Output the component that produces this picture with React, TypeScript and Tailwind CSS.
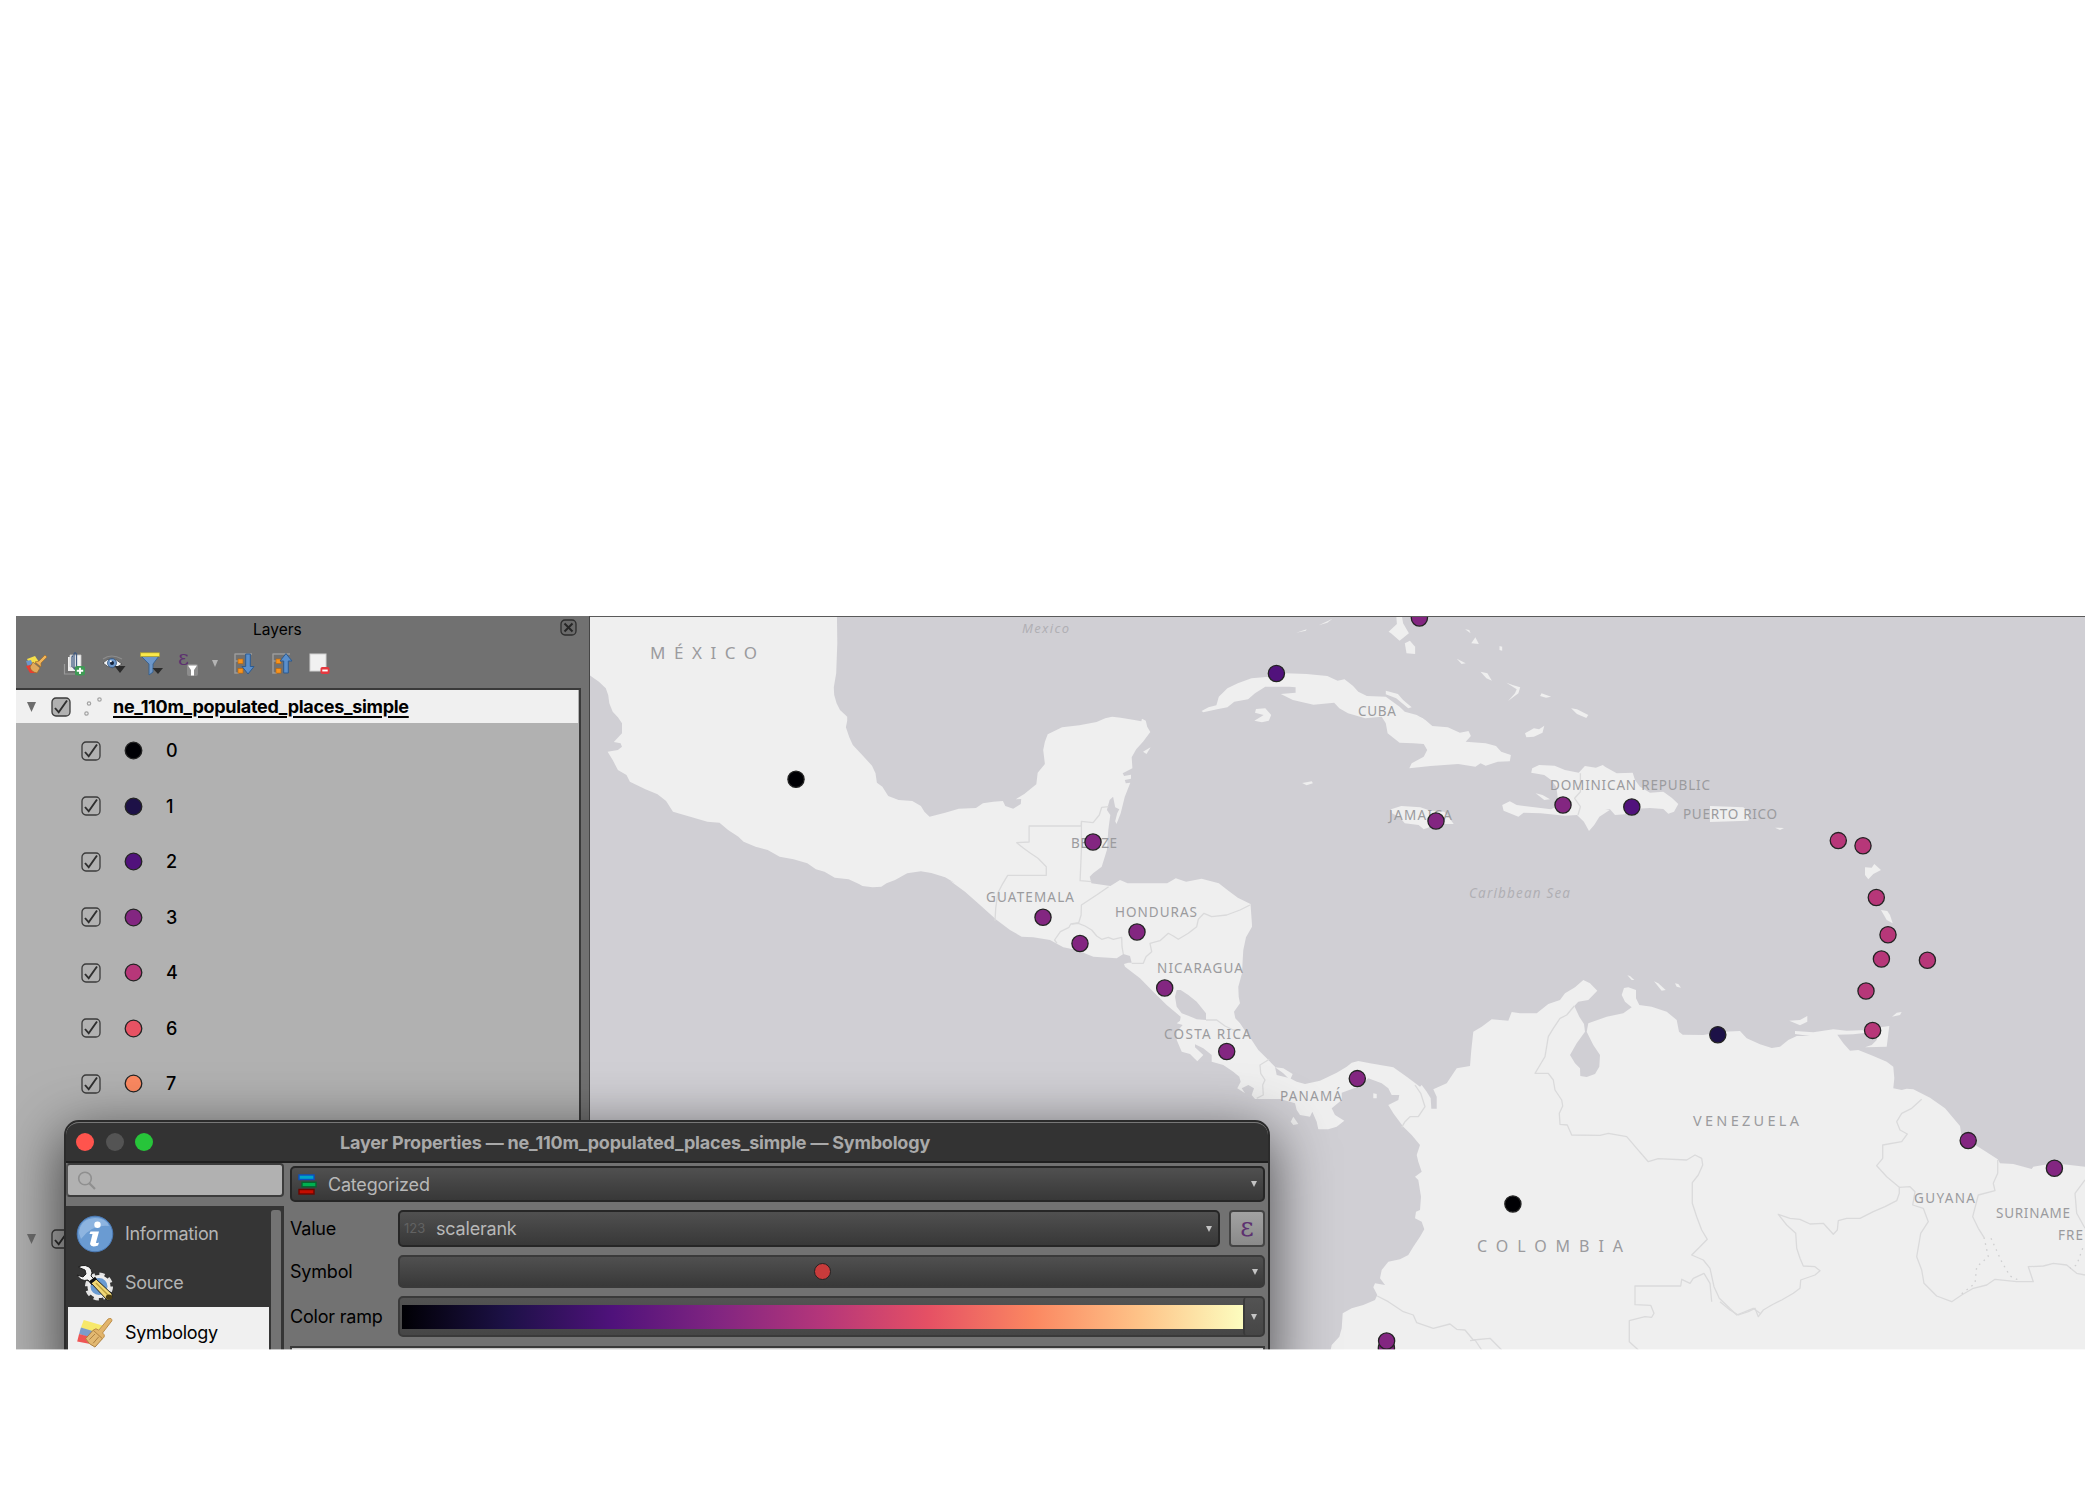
import React from 'react';

/* ---------- map geometry ---------- */

type Frame = [ox: number, oy: number, sx: number, sy: number];
type Part = [Frame, string];

// Survey frames: each coastline part is digitised in its own local grid.
const A: Frame = [580, 600, 2.9037, 3];
const B: Frame = [1100, 600, 2.9037, 3];
const C: Frame = [950, 850, 3, 3];
const D: Frame = [1260, 1000, 3, 3];
const F: Frame = [1700, 1000, 3, 3];
const G: Frame = [1600, 600, 3, 3];

const line = (...parts: Part[]) =>
  'M' +
  parts
    .flatMap(([[ox, oy, sx, sy], pts]) =>
      pts
        .trim()
        .split(/\s+/)
        .map((p) => {
          const [x, y] = p.split(',').map(Number);
          return `${(ox + x / sx).toFixed(1)} ${(oy + y / sy).toFixed(1)}`;
        }),
    )
    .join('L');
const area = (...parts: Part[]) => line(...parts) + 'Z';

const MAINLAND = area(
  [A, '20,40 746,40 747,130 744,220 737,262 738,285 745,310 755,330 776,350 776,362 772,382 782,412 792,435 822,468 848,497 858,520 862,548 878,560 895,588 925,600 965,603 990,618 1000,635 1015,650 1060,638 1100,626 1150,624 1170,610 1200,605 1228,603 1235,618 1258,626 1280,612 1281,597 1265,598 1290,582 1325,553 1329,518 1350,492 1345,450 1350,425 1358,403 1400,382 1450,376 1500,366 1525,355'],
  [B, '35,350 60,353 100,360 120,364 122,356 133,362 137,380 146,396 125,425 105,448 92,472 94,505 66,520 70,528 90,524 90,536 72,540 75,550 88,548 72,590 60,640 48,672 44,664 50,640 56,628 44,622 38,590 28,600 20,630 30,645 24,690 20,750 5,800 -20,820'],
  [A, '1480,830 1485,850 1520,855 1540,858 1560,845 1568,840'],
  [B, '65,843 80,850 195,850 220,835 250,845 295,836 345,850 370,870 400,893 437,912 441,970'],
  [C, '906,230 888,262 880,300 878,330 876,370 865,410 866,440 870,460 852,485 856,505 870,520 890,550 905,570 925,600 950,625 975,650 980,675 1020,685 1040,695 1065,702 1110,692 1160,668 1190,650 1205,638 1225,633 1260,640 1330,652 1370,680 1410,710'],
  [D, '485,255 500,275 512,295 514,326 530,326 530,290 520,268 560,250 590,205 630,198 634,150 640,95 665,80 695,58 745,62 755,36 780,40 830,40 865,12 900,0 915,-20 945,-38 970,-60 990,-50 1012,-28 985,0 955,5 943,18 958,50 972,72 975,95 950,130 930,165 945,190 960,205 961,228 980,231 1005,222 1018,200 1020,165 1000,135 985,105 980,95 985,70 1040,50 1090,40 1115,22 1095,5 1085,-15 1092,-36 1105,-38 1128,-30 1128,-5 1138,15 1175,20 1220,35 1250,60 1257,95 1268,104 1330,105 1390,95 1440,93 1460,115 1500,133'],
  [F, '180,133 215,144 240,140 265,120 290,108 330,108 285,102 285,93 340,97 400,88 440,92 500,90 500,98 460,103 412,104 430,130 450,152 475,150 520,168 560,185 580,200 583,235 580,265 605,270 620,266 640,268 690,293 735,325 780,378 785,410 850,450 893,478 900,490 940,492 995,507 1000,500 1060,490 1110,495 1170,502 1170,1060'],
  [D, '210,1060 215,1035 238,1010 245,985 248,940 275,925 310,915 345,900 352,885 340,862 345,850 375,855 360,835 365,810 385,785 420,778 445,765 460,740 480,710 493,688 485,665 465,655 468,635 480,630 483,590 475,540 465,530 485,515 475,485 470,465 480,435 455,405 430,380 400,340 385,315 415,300 418,285 395,285 385,265 365,250 345,242 325,235 290,262 245,278 245,300 215,325 225,345 253,362 230,380 205,388 175,388 170,365 157,335 150,350 120,345 110,330 105,310 60,297 0,297'],
  [C, '915,747 905,735 912,715 895,705 875,715 885,730 862,715 872,695 868,680 850,665 820,645 785,635 785,615 760,595 735,583 735,592 760,615 742,634 720,612 695,605 680,570 680,545 698,525 680,520 690,512 692,500 650,465 610,425 570,385 525,350 522,342 535,338 545,338 540,318 520,312 500,325 430,320 380,300 340,292 300,270 250,262 215,260 180,240 140,210 90,165 45,125 0,92'],
  [A, '1090,850 1060,832 1020,819 990,814 950,820 915,840 890,850 875,860 850,862 820,858 810,852 780,838 740,833 710,815 685,808 660,790 620,778 580,770 545,750 510,740 475,725 460,710 430,690 405,668 370,665 320,650 270,635 250,603 225,583 190,568 145,545 135,525 110,510 95,480 80,455 110,450 122,440 118,430 98,426 122,400 122,370 110,352 95,335 85,310 82,285 75,265 55,245 20,220'],
);

const ISLANDS = [
  // Cuba and its keys
  area([B, '295,333 315,322 338,316 345,290 370,265 400,250 440,235 490,230 540,220 600,222 660,228 690,242 710,238 735,258 750,275 775,288 830,290 870,320 885,335 920,345 945,360 965,378 1010,382 1045,398 1070,393 1077,408 1062,425 1120,430 1150,438 1165,455 1193,465 1190,484 1155,485 1120,497 1105,490 1090,500 1040,492 960,498 898,505 905,490 940,470 950,450 940,432 910,430 870,428 835,400 830,370 818,350 770,355 720,340 695,325 680,308 620,314 560,300 525,282 568,278 568,262 550,260 480,260 450,280 430,298 390,305 370,322 340,328 300,337']),
  area([B, '453,327 480,325 497,345 490,362 470,367 448,362 465,352 475,345 450,338']),
  area([B, '830,272 865,282 880,300 905,322 895,325 860,295 830,283']),
  area([B, '925,350 938,355 945,365 930,360']),
  // Jamaica, Cayman
  area([B, '845,628 875,618 930,622 960,632 1000,635 1015,655 1027,672 1000,672 960,680 940,688 925,675 885,670 870,652 848,640']),
  area([B, '587,549 615,544 618,550 600,556']),
  // Hispaniola
  area(
    [B, '1255,505 1275,495 1320,497 1350,510 1390,518 1408,498 1440,503 1460,495'],
    [G, '15,500 50,520 98,518 105,540 120,560 150,578 190,575 215,593 235,612 222,635 205,641 190,627 150,624 100,627 75,643 45,645 30,628 15,628'],
    [B, '1480,630 1450,650 1435,675 1420,693 1405,665 1385,645 1350,647 1280,640 1230,638 1215,650 1172,632 1168,615 1190,604 1210,615 1310,628 1340,612 1330,600 1325,560 1310,540 1290,525 1252,518'],
  ),
  area([B, '1265,580 1285,585 1307,598 1290,600']),
  // Lesser islands
  area([G, '330,618 430,622 450,640 445,662 330,666']),
  area([G, '525,683 552,684 540,690']),
  area([G, '795,802 815,803 823,792 843,810 820,822 805,838 795,825']),
  area([G, '843,930 862,933 870,945 878,970 860,960']),
  area([F, '540,82 568,78 560,140 495,142 515,135 530,120']),
  area([F, '268,62 300,60 322,48 322,65 300,76']),
  area([F, '576,50 590,38 605,36 600,45']),
  area([G, '82,1126 90,1128 103,1140 95,1140']),
  area([G, '162,1144 175,1150 197,1170 185,1172']),
  area([G, '225,1150 235,1152 243,1163 230,1160']),
  area([B, '125,455 147,442 135,462']),
  area([C, '1030,800 1045,822 1030,825 1022,815']),
  area([C, '1270,730 1280,732 1280,745 1270,745']),
  area([C, '975,652 1000,655 1028,672 1020,690 1000,670']),
  // Bahamas
  area([B, '860,45 876,45 880,70 897,100 870,122 845,100 838,95 862,72']),
  area([B, '885,130 900,122 915,140 915,162 890,160']),
  area([B, '1060,88 1072,90 1076,100']),
  area([B, '1090,112 1100,132 1078,130']),
  area([B, '1036,176 1062,190 1050,192']),
  area([B, '1160,138 1168,140 1168,152 1160,150']),
  area([B, '1105,215 1125,220 1138,242 1122,235']),
  area([B, '1180,248 1200,256 1220,262 1215,280 1185,303 1205,280 1210,268']),
  area([B, '1278,288 1282,280 1310,290 1295,293']),
  area([B, '1368,325 1385,328 1418,345 1412,354 1385,342']),
  area([B, '1234,400 1260,385 1275,388 1290,377 1285,398 1260,410 1238,412']),
  area([B, '570,98 600,88 598,92']),
  area([B, '635,76 675,56 660,68']),
];

const LAKES = [area([C, '680,420 692,420 715,435 740,455 768,490 768,510 740,508 715,497 695,490 680,470 675,440'])];

const BORDERS = [
  line([A, '1456,668 1456,678 1304,678 1304,726 1268,728 1288,745 1308,760 1330,775 1354,800 1354,826 1242,826 1228,850 1213,880 1207,925 1205,962']),
  line([A, '1535,620 1515,622 1508,645 1490,668 1456,664 1456,750 1452,842 1485,845']),
  line([A, '1535,860 1500,885 1456,915 1455,945 1448,968 1425,972 1420,982 1395,995 1378,1020 1385,1030']),
  line([C, '365,222 385,220 405,228 425,240 440,258 455,268 475,262 490,268 515,262 516,290 520,312']),
  line([C, '545,340 580,340 588,320 605,305 600,280 630,272 655,250 670,258 685,268 715,250 740,230 745,208 762,190 785,200 830,195 870,180 900,165']),
  line([C, '768,510 800,510 825,528 850,540 870,540']),
  line([C, '958,628 930,645 932,670 945,690 938,705 940,735 920,745']),
  line([C, '1395,705 1412,730 1425,770 1405,800 1380,800 1365,815 1355,832']),
  line([D, '943,18 920,45 900,55 880,85 865,110 855,170 840,195 825,220 865,220 880,240 885,270 905,300 908,318 898,340 900,373 922,375 935,405 1020,406 1045,400 1100,410 1130,445 1165,485 1195,476 1280,480 1305,465 1325,475 1328,495 1315,525 1297,548 1297,610 1310,650 1325,690 1342,718 1320,740 1295,765 1330,780 1350,805 1362,860 1378,895 1430,945 1480,925 1500,940']),
  line([D, '1355,905 1350,850 1332,820 1300,835 1290,850 1265,838 1262,858 1125,858 1125,914 1172,916 1182,940 1175,952 1155,950 1108,962 1108,1025 1135,1050']),
  line([D, '352,888 385,905 430,935 460,945 470,968 520,985 570,972 590,988 615,990 640,1020 690,1015 725,1050']),
  line([D, '630,1022 645,1020 665,1050']),
  line([F, '60,905 90,930 115,945 145,935 165,925 175,950 190,930 215,915 245,900 280,880 300,865 302,840 345,825 360,812 345,800 310,798 300,775 290,745 287,700 260,675 235,643 270,655 300,658 330,672 370,670 400,703 412,690 415,662 440,655 480,655 520,635 555,620 590,602 598,580 598,562 560,530 530,497 548,475 548,435 605,425 622,402 600,390 590,365 605,340 635,325 665,298']),
  line([F, '598,562 630,560 645,575 638,615 670,625 685,665 662,700 650,770 665,810 672,850 710,888 755,905 785,885 820,865 860,855 885,838 950,845 1000,845 985,800 1030,798 1060,790 1100,795 1130,820 1155,825']),
  line([F, '893,480 893,520 880,550 885,572 835,585 818,650 835,685 852,712']),
  line([F, '1155,540 1125,580 1130,640 1155,685']),
  line([B, '1395,520 1395,575 1378,595 1395,620 1388,645']),
];

const DOTTED = [
  line([F, '852,712 865,770 830,800 825,850 780,885']),
  line([F, '873,715 905,785 930,828 955,840']),
  line([F, '1148,745 1130,795 1110,805']),
];

/* [text, x, baseline, width, font size, italic] */
const MAP_LABELS: [string, number, number, number, number, boolean?][] = [
  ['MÉXICO', 650, 659, 107, 17],
  ['Mexico', 1022, 633, 47, 13, true],
  ['CUBA', 1358, 716, 38, 13.5],
  ['JAMAICA', 1389, 820, 63, 13.5],
  ['DOMINICAN REPUBLIC', 1550, 789.5, 160, 13.5],
  ['PUERTO RICO', 1683, 819, 94, 13.5],
  ['Caribbean Sea', 1469, 898, 101, 13.5, true],
  ['BELIZE', 1071, 848, 46, 13.5],
  ['GUATEMALA', 986, 902, 88, 13.5],
  ['HONDURAS', 1115, 917, 82, 13.5],
  ['NICARAGUA', 1157, 973, 86, 13.5],
  ['COSTA RICA', 1164, 1039, 87, 13.5],
  ['PANAMÁ', 1280, 1100.5, 62, 13.5],
  ['VENEZUELA', 1693, 1126, 106, 14.5],
  ['COLOMBIA', 1477, 1252, 146, 16],
  ['GUYANA', 1914, 1202.5, 61, 13.5],
  ['SURINAME', 1996, 1217.5, 74, 13.5],
  ['FRE', 2058, 1240, 25, 13.5],
];

const CLASSES = [
  { rank: '0', color: '#000004' },
  { rank: '1', color: '#1d1147' },
  { rank: '2', color: '#51127c' },
  { rank: '3', color: '#832681' },
  { rank: '4', color: '#b73779' },
  { rank: '6', color: '#e75263' },
  { rank: '7', color: '#fc8961' },
];

/* [x, y, class colour] */
const PLACES: [number, number, string][] = [
  [796, 779.3, '#000004'],
  [1093, 842, '#832681'],
  [1043, 917.3, '#832681'],
  [1080, 943.5, '#832681'],
  [1137, 932, '#832681'],
  [1164.7, 988, '#832681'],
  [1226.7, 1051.5, '#832681'],
  [1357.3, 1078.6, '#832681'],
  [1419.4, 618, '#832681'],
  [1276.4, 673.5, '#51127c'],
  [1436, 821, '#832681'],
  [1563, 805, '#832681'],
  [1631.8, 807, '#51127c'],
  [1838.3, 840.6, '#b73779'],
  [1863, 845.7, '#b73779'],
  [1876.3, 897.5, '#b73779'],
  [1888, 934.7, '#b73779'],
  [1881.4, 959, '#b73779'],
  [1927.4, 960.3, '#b73779'],
  [1866, 991, '#b73779'],
  [1872.6, 1030.4, '#b73779'],
  [1717.8, 1034.7, '#1d1147'],
  [1968.2, 1140.6, '#832681'],
  [2054.4, 1168.2, '#832681'],
  [1512.9, 1204, '#000004'],
  [1386.4, 1348, '#832681'],
  [1386.6, 1341, '#832681'],
];

function MapCanvas() {
  return (
    <svg className="block h-[733px] w-[1495px]" viewBox="590 617 1495 733">
      <rect x="590" y="617" width="1495" height="733" fill="#d0cfd4" />
      <g fill="#efefef">
        <path d={MAINLAND} />
        {ISLANDS.map((d, i) => (
          <path key={i} d={d} />
        ))}
      </g>
      {LAKES.map((d, i) => (
        <path key={i} d={d} fill="#d0cfd4" />
      ))}
      <g fill="none" stroke="#dadadb" strokeWidth="1.3" strokeLinejoin="round">
        {BORDERS.map((d, i) => (
          <path key={i} d={d} />
        ))}
        {DOTTED.map((d, i) => (
          <path key={i} d={d} stroke="#cfcfd0" strokeDasharray="1.6 4.5" />
        ))}
      </g>
      <g fill="#9b9b9e" fontFamily='"Noto Sans", "Open Sans", sans-serif'>
        {MAP_LABELS.map(([t, x, y, w, size, italic]) => (
          <text
            key={t}
            x={x}
            y={y}
            fontSize={size}
            textLength={w}
            fontStyle={italic ? 'italic' : 'normal'}
            fill={italic ? '#b0b0b4' : undefined}
          >
            {t}
          </text>
        ))}
      </g>
      <g stroke="#232323" strokeWidth="1.3">
        {PLACES.map(([x, y, c], i) => (
          <circle key={i} cx={x} cy={y} r="8.1" fill={c} />
        ))}
      </g>
    </svg>
  );
}

/* ---------- icons ---------- */

function Brush({ className }: { className: string }) {
  return (
    <svg className={className} viewBox="0 0 38 32">
      <path d="M7 2 27 8 20 16 4 10Z" fill="#f7e86b" />
      <path d="M4 10 20 15 17 22 2 17Z" fill="#7a9ccb" />
      <path d="M2 17 17 21 21 29 0 25Z" fill="#ee5555" />
      <path d="M17 13 27 22 19 31 Q12 28 9 22Z" fill="#e2b871" stroke="#a97c3c" strokeWidth="1" />
      <path d="M13 23 19 17M17 27 23 20" stroke="#a97c3c" strokeWidth="1" />
      <path d="M17 13Q20 10 23 13L33 1Q37-1 37 3L27 16Q31 19 27 22Z" fill="#e2b46a" stroke="#b98942" strokeWidth="1" />
    </svg>
  );
}

function ToolBrush() {
  return (
    <svg className="h-[22px] w-[22px]" viewBox="0 0 22 22">
      <path d="M2 6 10 3 14 9 5 12Z" fill="#f5df4a" />
      <path d="M1 8 6 7 8 12 3 14Z" fill="#6d97c9" />
      <path d="M1 13 9 11 12 20 5 20Z" fill="#ea3c31" />
      <path d="M8 9 15 15 12 20Q6 19 5 14Z" fill="#e0a95c" stroke="#9a6b2c" strokeWidth=".7" />
      <path d="M10 9 14 8 20 2 22 4 16 10 16 14Z" fill="#f0b45a" stroke="#a46f27" strokeWidth=".7" />
    </svg>
  );
}

function AddGroup() {
  return (
    <svg className="h-[24px] w-[22px]" viewBox="0 0 22 24">
      <path d="M1.500 12V22H12" fill="none" stroke="#9a9a9a" strokeWidth="1.200" />
      <path d="M5 5H9V16H15V19H5Z" fill="#efefef" />
      <path d="M7 3H18V15H7Z" fill="#f2f2f2" stroke="#c9c9c9" strokeWidth=".8" />
      <path d="M9 15V5Q9 4 10 4M11 17V2Q12-.5 13.500 2V15Q12 17.500 11 17" fill="none" stroke="#415a80" strokeWidth="1.300" />
      <rect x="12" y="14" width="10" height="9.500" rx="2" fill="#3f9a55" />
      <path d="M17 15.700V22M13.800 18.800H20.200" stroke="#fff" strokeWidth="1.900" />
    </svg>
  );
}

function Eye() {
  return (
    <svg className="h-[20px] w-[24px]" viewBox="0 0 24 20">
      <path d="M1 5Q9-1 20 5" fill="none" stroke="#8d8d8d" strokeWidth="1.200" />
      <path d="M1 9Q9 0 20 10Q10 18 1 9Z" fill="#f2f2f2" stroke="#4a4a4a" strokeWidth=".9" />
      <circle cx="10" cy="9" r="4.500" fill="#6d97c9" stroke="#35567f" strokeWidth=".8" />
      <circle cx="10" cy="9" r="2" fill="#15233a" />
      <circle cx="8.800" cy="7.300" r="1" fill="#fff" />
      <path d="M12.500 12H23.500L18 19Z" fill="#2b2b2b" />
    </svg>
  );
}

function Filter() {
  return (
    <svg className="h-[24px] w-[24px]" viewBox="0 0 24 24">
      <path d="M1 4H19L13 12V20L9 23V12Z" fill="#6d97c9" stroke="#35608f" strokeWidth=".9" />
      <rect x=".5" y=".8" width="19" height="3.600" fill="#fbe94a" stroke="#b5a424" strokeWidth=".7" />
      <path d="M12.500 16H23L18 22Z" fill="#2b2b2b" />
    </svg>
  );
}

function FilterExpression() {
  return (
    <div className="flex h-[24px] w-[22px] items-start">
      <span className="-mt-[7px] font-['DejaVu_Serif',serif] text-[21px] leading-[26px] text-[#5d3170]">ε</span>
      <svg className="-ml-[2px] mt-[12px] h-[12px] w-[11px] shrink-0" viewBox="0 0 11 12">
        <rect width="11" height="12" rx="2" fill="#8d8d8d" />
        <path d="M1 1.500H10L7 6V11.500H4V6Z" fill="#fff" />
      </svg>
    </div>
  );
}

function Tree({ up }: { up?: boolean }) {
  return (
    <svg className="h-[22px] w-[22px]" viewBox="0 0 22 22">
      <path d="M1.500 1H19M2 1V20H6M2 8H6" fill="none" stroke="#9b9b9b" strokeWidth="1.500" />
      <rect x="5" y="6" width="5" height="4.600" fill="#f7931e" stroke="#b96508" strokeWidth=".6" />
      <rect x="5" y="15.500" width="5" height="4.600" fill="#f7931e" stroke="#b96508" strokeWidth=".6" />
      <path
        d={up ? 'M15 .6 21 8H17.300V20H12.700V8H9Z' : 'M15 21 21 13.500H17.300V1H12.700V13.500H9Z'}
        fill="#5b8fcb"
        stroke="#2c5b90"
        strokeWidth="1"
      />
    </svg>
  );
}

function RemoveLayer() {
  return (
    <svg className="h-[22px] w-[21px]" viewBox="0 0 21 22">
      <rect x="1" y="1" width="16" height="17" fill="#f1f1f1" stroke="#d2d2d2" />
      <rect x="11.500" y="14" width="9" height="7" rx="1.800" fill="#e5383f" />
      <path d="M13.300 17.500H18.700" stroke="#fff" strokeWidth="1.900" />
    </svg>
  );
}

function Check({ shaded }: { shaded?: boolean }) {
  return (
    <svg className="h-[20px] w-[20px] shrink-0" viewBox="0 0 20 20">
      <rect x="1" y="1" width="18" height="18" rx="4" fill={shaded ? '#b1b1b1' : 'none'} stroke="#3b3b3b" strokeWidth="1.300" />
      <path d="M4 11 7.700 15.300 16 3.500" fill="none" stroke="#2f2f2f" strokeWidth="1.900" />
    </svg>
  );
}

function Triangle({ className }: { className: string }) {
  return (
    <svg className={className} viewBox="0 0 10 10" preserveAspectRatio="none">
      <path d="M0 0H10L5 10Z" fill="currentColor" />
    </svg>
  );
}

/* ---------- layers panel ---------- */

function LayersPanel() {
  return (
    <aside className="flex h-full w-[574px] shrink-0 flex-col border-r border-[#454545] bg-[#717171]">
      <div className="flex h-[27px] items-center pl-[237px] pr-[12px]">
        <span className="flex-1 text-[15.500px] tracking-[0px] text-black">Layers</span>
        <svg className="-mt-[5px] h-[17px] w-[17px]" viewBox="0 0 17 17">
          <rect x="1" y="1" width="15" height="15" rx="4" fill="#6a6a6a" stroke="#2d2d2d" strokeWidth="1.300" />
          <path d="M4.500 4.500 12.500 12.500M12.500 4.500 4.500 12.500" stroke="#262626" strokeWidth="2" />
        </svg>
      </div>
      <div className="flex h-[45px] items-center pb-[4px] pl-[9px]">
        <div className="w-[38px]"><ToolBrush /></div>
        <div className="w-[39px]"><AddGroup /></div>
        <div className="w-[38px]"><Eye /></div>
        <div className="w-[38px]"><Filter /></div>
        <div className="w-[34px]"><FilterExpression /></div>
        <div className="w-[21px]"><Triangle className="h-[7px] w-[6px] text-[#b4b4b4]" /></div>
        <div className="w-[38px]"><Tree /></div>
        <div className="w-[38px]"><Tree up /></div>
        <RemoveLayer />
      </div>
      <div className="mr-[8px] flex-1 border-r-2 border-t-2 border-[#3a3a3a] bg-[#b1b1b1]">
        <div className="mr-px flex h-[33px] items-center bg-[#f0f0f0] pl-[11px]">
          <Triangle className="h-[10px] w-[9px] text-[#6d6d6d]" />
          <div className="ml-[15px]"><Check shaded /></div>
          <svg className="ml-[13px] h-[20px] w-[18px]" viewBox="0 0 18 20" fill="none" stroke="#a3a3a3" strokeWidth="1.200">
            <circle cx="5" cy="6.500" r="1.700" />
            <circle cx="15.500" cy="2.500" r="1.700" />
            <circle cx="2.500" cy="16.500" r="1.700" />
          </svg>
          <span className="ml-[11px] whitespace-nowrap text-[18px] font-bold tracking-[-0.300px] text-black underline decoration-2 underline-offset-[3px]">
            ne_110m_populated_places_simple
          </span>
        </div>
        {CLASSES.map((c) => (
          <div key={c.rank} className="flex h-[55.500px] items-center pl-[65px]">
            <Check />
            <svg className="ml-[23px] h-[19px] w-[19px]" viewBox="0 0 19 19">
              <circle cx="9.500" cy="9.500" r="8.300" fill={c.color} stroke="#232323" strokeWidth="1.300" />
            </svg>
            <span className="ml-[23px] text-[18px] font-medium text-black">{c.rank}</span>
          </div>
        ))}
        <div className="mt-[99px] flex h-[56px] items-center pl-[11px]">
          <Triangle className="h-[10px] w-[9px] text-[#6d6d6d]" />
          <div className="ml-[15px]"><Check /></div>
        </div>
      </div>
    </aside>
  );
}

/* ---------- layer properties dialog ---------- */

function InfoIcon() {
  return (
    <svg className="h-[38px] w-[38px]" viewBox="0 0 38 38">
      <circle cx="19" cy="19" r="17.800" fill="#6a9bd2" stroke="#4b7ab5" />
      <path d="M3 18Q4 4 19 3Q30 3 33 11Q16 9 5 24Z" fill="#9dbfe6" opacity=".7" />
      <circle cx="21.500" cy="9.800" r="3.200" fill="#fff" />
      <path d="M14.500 16.500H23L20 27.500Q20 28.500 23 27.500L22 30.500Q15 33 14 29L16.500 19H13.500Z" fill="#fff" />
    </svg>
  );
}

function SourceIcon() {
  return (
    <svg className="h-[38px] w-[38px]" viewBox="0 0 38 38">
      <circle cx="23" cy="22.500" r="11.800" fill="none" stroke="#e3e3e3" strokeWidth="4.500" strokeDasharray="5 4.270" />
      <circle cx="23" cy="22.500" r="10" fill="#6a9bd2" stroke="#ececec" strokeWidth="3" />
      <path d="M2 3Q10-1 15 5Q17 9 15 12L20 17 16 21 12 16Q5 18 1 11L7 13 10 10 9 6Z" fill="#f4f4f4" stroke="#222" strokeWidth="1" />
      <path d="M15 19 20 15 36 30Q37 36 31 36Z" fill="#f0d877" stroke="#222" strokeWidth="1" />
      <path d="M20 19 33 32" stroke="#bd9f3b" strokeWidth="1.400" />
      <ellipse cx="33" cy="33" rx="3.200" ry="2.600" fill="#4a3c12" />
      <path d="M14 18.500 20 14" stroke="#111" strokeWidth="3" />
    </svg>
  );
}

const BOX = 'rounded-[5px] border-2 border-[#262626] bg-linear-to-b from-[#505050] to-[#383838]';

function Dialog() {
  return (
    <section className="absolute left-[48px] top-[504px] flex h-[260px] w-[1206px] flex-col overflow-hidden rounded-t-[15px] border-2 border-[#2b2b2b] bg-[#727272] shadow-[0_16px_58px_4px_rgba(0,0,0,0.62)]">
      <header className="flex h-[41px] shrink-0 items-center rounded-t-[13px] border-b-2 border-t border-b-[#1f1f1f] border-t-[#777] bg-[#333333] pl-[10px]">
        <div className="flex gap-[11.500px]">
          <i className="h-[18px] w-[18px] rounded-full bg-[#ff544d]" />
          <i className="h-[18px] w-[18px] rounded-full bg-[#545454]" />
          <i className="h-[18px] w-[18px] rounded-full bg-[#27c53a]" />
        </div>
        <h1 className="ml-[187px] whitespace-nowrap text-[18px] font-bold tracking-[-0.200px] text-[#a9a9a9]">
          Layer Properties — ne_110m_populated_places_simple — Symbology
        </h1>
      </header>
      <div className="flex flex-1">
        <div className="flex w-[218px] shrink-0 flex-col">
          <div className="flex h-[34px] items-center rounded-[4px] border-2 border-[#3c3c3c] border-l-[#555] bg-[#b1b1b1] pl-[9px]">
            <svg className="h-[19px] w-[19px]" viewBox="0 0 19 19" fill="none" stroke="#8f8f8f">
              <circle cx="8" cy="7.500" r="6.300" strokeWidth="1.600" />
              <path d="M12.300 12.300 18 18" strokeWidth="2.200" />
            </svg>
          </div>
          <div className="mt-[9px] flex flex-1 bg-[#353535]">
            <nav className="w-[203px] pl-[2px] pt-[3px] text-[18px] tracking-[-0.300px] text-[#b4b4b4]">
              <div className="flex h-[49px] items-center pl-[8px]">
                <InfoIcon />
                <span className="ml-[11px]">Information</span>
              </div>
              <div className="flex h-[49px] items-center pl-[8px]">
                <SourceIcon />
                <span className="ml-[11px]">Source</span>
              </div>
              <div className="flex h-[51px] items-center bg-[#f0f0f0] pl-[8px] text-black">
                <Brush className="h-[30px] w-[38px]" />
                <span className="ml-[11px]">Symbology</span>
              </div>
            </nav>
            <div className="ml-[2px] mt-[4px] w-[10px] rounded-t-[3px] bg-[#737373]" />
          </div>
        </div>
        <div className="ml-[6px] flex w-[975px] flex-col pt-[3px] text-[18px] tracking-[-0.200px]">
          <div className={`${BOX} flex h-[36px] items-center pl-[6px] pr-[6px] text-[#b8b8b8]`}>
            <svg className="h-[21px] w-[19px]" viewBox="0 0 19 21" strokeWidth="1.400">
              <rect x="1" y="1" width="15" height="4.500" fill="#00a5c8" stroke="#0b50c4" />
              <rect x="4" y="8.300" width="14" height="4.500" fill="#00b050" stroke="#05662f" />
              <rect x="1" y="15.500" width="15" height="4.500" fill="#c40d00" stroke="#6b0600" />
            </svg>
            <span className="ml-[11px] flex-1">Categorized</span>
            <Triangle className="h-[6px] w-[6px] text-[#c4c4c4]" />
          </div>
          <div className="mt-[8px] flex h-[37px] items-center">
            <label className="w-[108px] text-black">Value</label>
            <div className={`${BOX} flex h-[37px] w-[822px] items-center pl-[4px] pr-[6px]`}>
              <span className="w-[32px] text-[13px] tracking-[0px] text-[#626262]">123</span>
              <span className="flex-1 text-[#b8b8b8]">scalerank</span>
              <Triangle className="h-[6px] w-[6px] text-[#c4c4c4]" />
            </div>
            <div className="ml-[9px] flex h-[37px] w-[36px] items-center justify-center rounded-[4px] border-2 border-[#444] bg-linear-to-b from-[#a2a2a2] to-[#8a8a8a] pb-[3px] font-['DejaVu_Serif',serif] text-[26px] leading-none text-[#5d3170]">
              ε
            </div>
          </div>
          <div className="mt-[8px] flex h-[33px] items-center">
            <label className="w-[108px] text-black">Symbol</label>
            <div className="flex h-[33px] w-[867px] items-center rounded-[5px] border-2 border-[#3a3a3a] bg-linear-to-b from-[#505050] to-[#393939] pl-[414px] pr-[5px]">
              <i className="h-[17px] w-[17px] rounded-full border border-[#232323] bg-[#c83b3b]" />
              <Triangle className="ml-auto h-[6px] w-[6px] text-[#c4c4c4]" />
            </div>
          </div>
          <div className="mt-[8px] flex h-[41px] items-center">
            <label className="w-[108px] whitespace-nowrap text-black">Color ramp</label>
            <div className="flex h-[41px] w-[867px] items-center rounded-[5px] border-2 border-[#3a3a3a] bg-linear-to-b from-[#535353] to-[#464646] pl-[2px]">
              <div className="h-[24px] w-[841px] bg-[linear-gradient(90deg,#000004,#1d1147_12.500%,#4f127b_25%,#812581_37.500%,#b5367a_50%,#e55064_62.500%,#fb8761_75%,#fec287_87.500%,#fcfdbf)]" />
              <div className="flex h-[39px] flex-1 items-center justify-center rounded-[4px] border-l-2 border-[#3a3a3a]">
                <Triangle className="h-[6px] w-[6px] text-[#c4c4c4]" />
              </div>
            </div>
          </div>
          <div className="mt-[9px] h-[40px] border-2 border-[#3a3a3a] bg-[#c9c9c9]" />
        </div>
      </div>
    </section>
  );
}

export default function App() {
  return (
    <div className="h-[1500px] w-[2100px] overflow-hidden bg-white pl-[16px] pt-[616px] font-['Inter',sans-serif]">
      <main className="relative flex h-[734px] w-[2069px] overflow-hidden">
        <LayersPanel />
        <div className="flex-1 border-t border-[#5a5a5a]">
          <MapCanvas />
        </div>
        <Dialog />
        <div className="absolute bottom-0 left-0 h-px w-full bg-white/60" />
      </main>
    </div>
  );
}
